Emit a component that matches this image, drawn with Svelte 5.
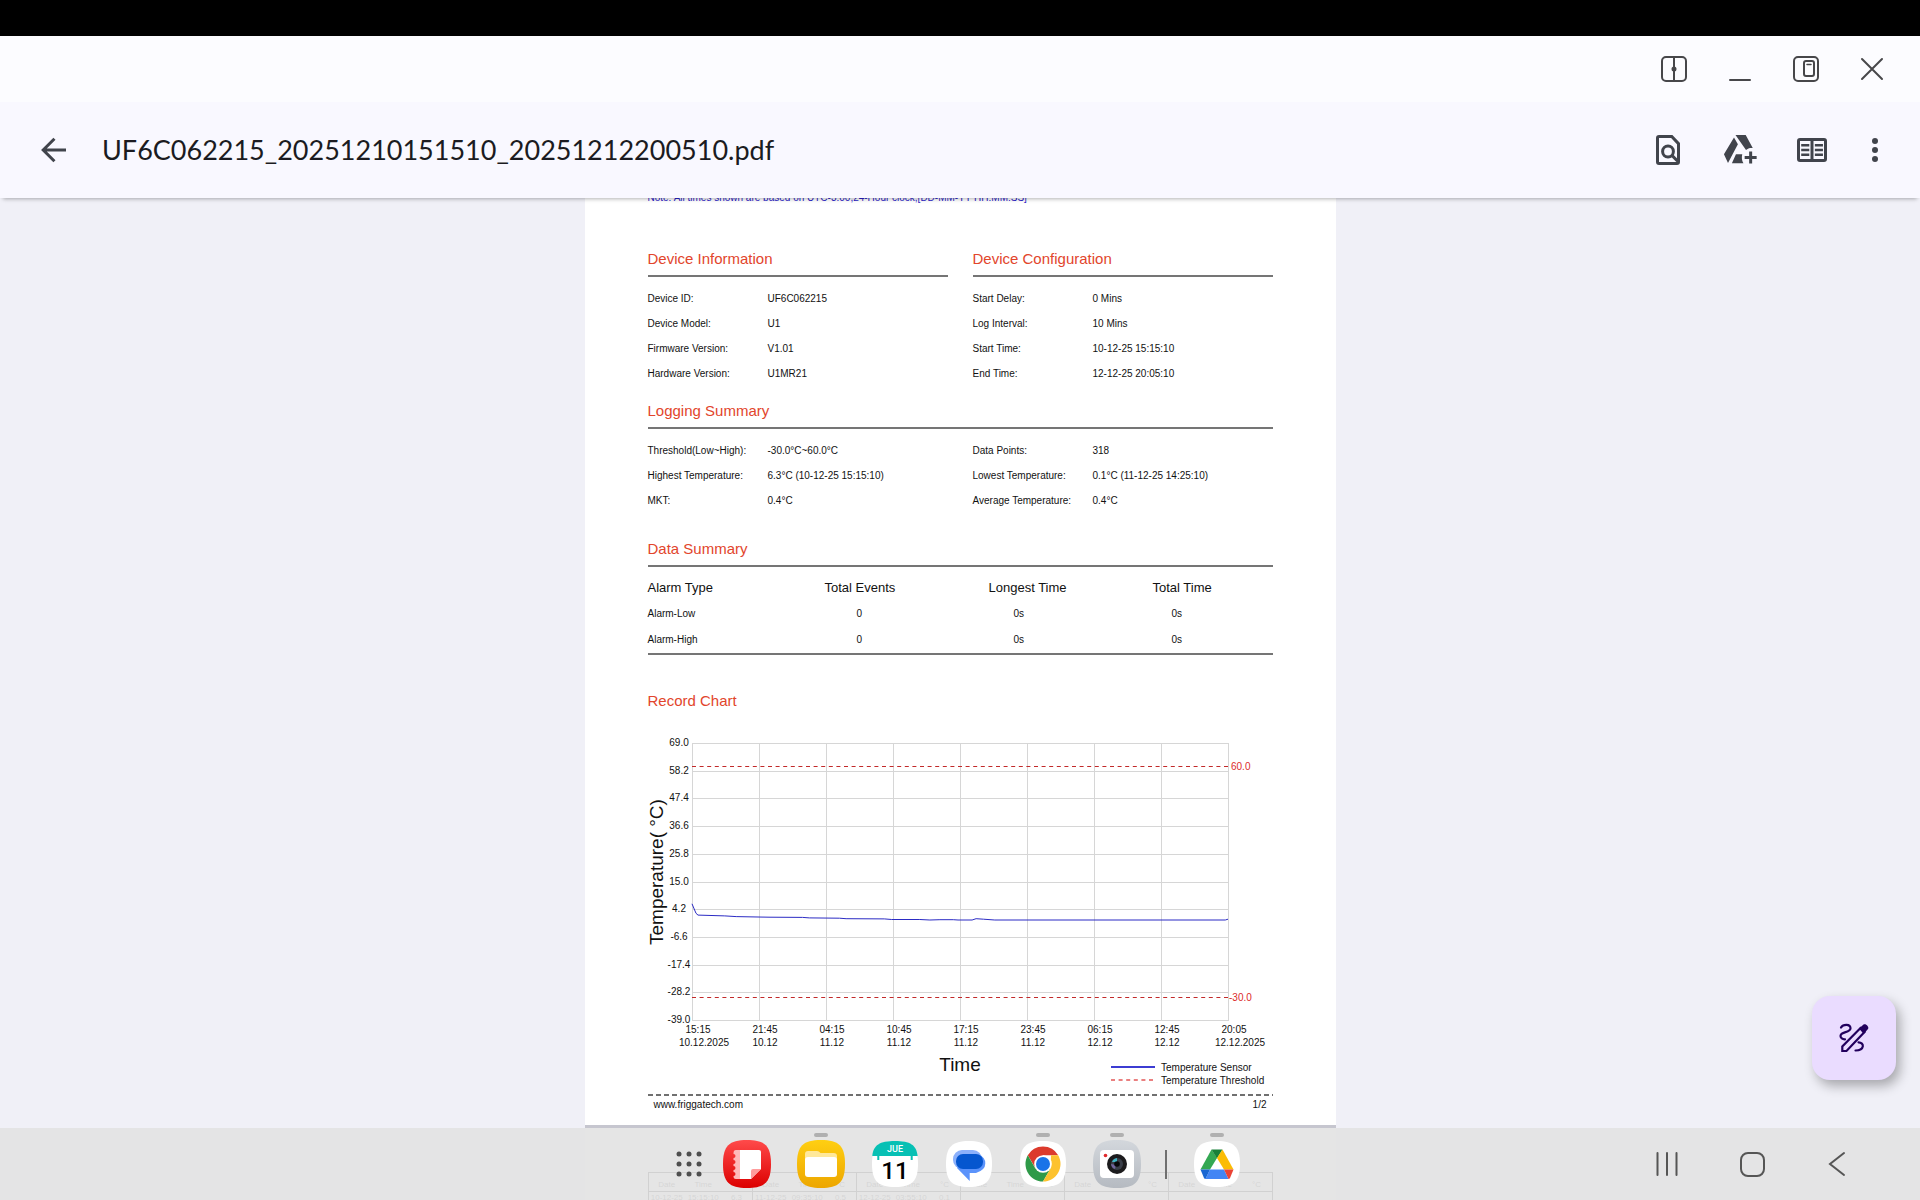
<script>
  const fileName = 'UF6C062215_20251210151510_20251212200510.pdf';

  const deviceInfo = [
    ['Device ID:', 'UF6C062215'],
    ['Device Model:', 'U1'],
    ['Firmware Version:', 'V1.01'],
    ['Hardware Version:', 'U1MR21'],
  ];
  const deviceConfig = [
    ['Start Delay:', '0 Mins'],
    ['Log Interval:', '10 Mins'],
    ['Start Time:', '10-12-25 15:15:10'],
    ['End Time:', '12-12-25 20:05:10'],
  ];
  const loggingLeft = [
    ['Threshold(Low~High):', '-30.0°C~60.0°C'],
    ['Highest Temperature:', '6.3°C (10-12-25 15:15:10)'],
    ['MKT:', '0.4°C'],
  ];
  const loggingRight = [
    ['Data Points:', '318'],
    ['Lowest Temperature:', '0.1°C (11-12-25 14:25:10)'],
    ['Average Temperature:', '0.4°C'],
  ];
  const alarms = [
    ['Alarm-Low', '0', '0s', '0s'],
    ['Alarm-High', '0', '0s', '0s'],
  ];

  // Chart geometry
  const plot = { left: 44, top: 32, width: 536, height: 277 };
  const yMax = 69;
  const yMin = -39;
  const yTicks = [69, 58.2, 47.4, 36.6, 25.8, 15, 4.2, -6.6, -17.4, -28.2, -39];
  const xTicks = [
    ['15:15', '10.12.2025'],
    ['21:45', '10.12'],
    ['04:15', '11.12'],
    ['10:45', '11.12'],
    ['17:15', '11.12'],
    ['23:45', '11.12'],
    ['06:15', '12.12'],
    ['12:45', '12.12'],
    ['20:05', '12.12.2025'],
  ];
  const yOf = (t) => plot.top + ((yMax - t) / (yMax - yMin)) * plot.height;
  const xOf = (i) => plot.left + i * (plot.width / 8);
  const grid = (v) => Math.round(v) + 0.5;

  // [tick position, temperature]
  const series = [
    [0, 6.3], [0.06, 2.6], [0.09, 1.9], [0.49, 1.6], [0.66, 1.3], [1.15, 1.1], [1.65, 1.0],
    [1.75, 0.8], [2.2, 0.7], [2.3, 0.5], [2.87, 0.4], [2.98, 0.2], [3.4, 0.2], [3.55, 0],
    [3.7, 0.1], [3.9, 0.1], [3.97, 0], [4.18, 0], [4.24, 0.5], [4.35, 0.3], [4.52, 0],
    [7.96, 0], [8, 0.3],
  ];
  const points = series.map(([i, t]) => `${xOf(i).toFixed(1)},${yOf(t).toFixed(1)}`).join(' ');

  const records = [
    ['10-12-25', '15:15:10', '6.3'],
    ['11-12-25', '09:35:10', '0.5'],
    ['12-12-25', '03:55:10', '0.1'],
    ['', '', ''],
    ['', '', ''],
    ['', '', ''],
  ];
</script>

{#snippet fields(rows)}
  <dl class="fields">
    {#each rows as [name, value]}
      <div class="field"><dt>{name}</dt><dd>{value}</dd></div>
    {/each}
  </dl>
{/snippet}

<div class="screen">
  <div class="status"></div>

  <div class="windowbar">
    <button class="win" aria-label="Split view">
      <svg viewBox="0 0 26 26"><rect x="1" y="1" width="24" height="24" rx="4" /><path d="M13 1v24" /><circle cx="13" cy="13" r="1.500" /></svg>
    </button>
    <button class="win" aria-label="Minimize">
      <svg viewBox="0 0 26 26"><path d="M3 24h20" /></svg>
    </button>
    <button class="win" aria-label="Pop-up view">
      <svg viewBox="0 0 26 26"><rect x="1" y="1" width="24" height="24" rx="4" /><rect x="11" y="5" width="10" height="15" rx="2" /><path d="M14 8.500h4" stroke-width="1.500" /></svg>
    </button>
    <button class="win" aria-label="Close">
      <svg viewBox="0 0 26 26"><path d="M3 3l20 20M23 3L3 23" /></svg>
    </button>
  </div>

  <header class="toolbar">
    <button class="tool" aria-label="Back">
      <svg viewBox="0 0 24 24"><path class="line" d="M20 12H5M12.300 4.500L4.800 12l7.500 7.500" /></svg>
    </button>
    <h1>{fileName}</h1>
    <div class="actions">
      <button class="tool" aria-label="Find in document">
        <svg viewBox="0 0 24 24"><path class="line" d="M6 3h8.500L19 7.800V20a1 1 0 0 1-1 1H6a1 1 0 0 1-1-1V4a1 1 0 0 1 1-1z" /><circle class="line" cx="12" cy="13" r="3.600" /><path class="line" d="M14.600 15.600L19 20" /></svg>
      </button>
      <button class="tool" aria-label="Add to Drive">
        <svg viewBox="0 0 24 24"><path d="M8 3.600l2.600 4.500L4 20.600 1.300 14.800zM9 2h6.800l4.700 8.700c-1.800-.2-3.300.2-4.500 1.300zM9.300 14.900h4.200c-.5 2.200-.3 4.200.8 6H6.600z" /><path class="line" d="M19.100 13v8M15.100 17h8" /></svg>
      </button>
      <button class="tool" aria-label="Reading mode">
        <svg viewBox="0 0 24 24"><rect class="line" x="3" y="5" width="18" height="14" rx="1" /><path class="line" d="M12 5v14" /><path class="line thin" d="M4.800 8.800h5.400M4.800 12h5.400M4.800 15.200h5.400M13.900 8.800h5.400M13.900 12h5.400M13.900 15.200h5.400" /></svg>
      </button>
      <button class="tool more" aria-label="More options">
        <svg viewBox="0 0 24 24"><circle cx="12" cy="6" r="2" /><circle cx="12" cy="12" r="2" /><circle cx="12" cy="18" r="2" /></svg>
      </button>
    </div>
  </header>

  <main class="viewer">
    <article class="page first">
      <p class="note">Note: All times shown are based on UTC-3:00,24-Hour clock,[DD-MM-YY HH:MM:SS]</p>

      <div class="pair device">
        <section><h2 class="ruled">Device Information</h2>{@render fields(deviceInfo)}</section>
        <section><h2 class="ruled">Device Configuration</h2>{@render fields(deviceConfig)}</section>
      </div>

      <section class="logging">
        <h2 class="ruled">Logging Summary</h2>
        <div class="pair">{@render fields(loggingLeft)}{@render fields(loggingRight)}</div>
      </section>

      <section class="data">
        <h2 class="ruled">Data Summary</h2>
        <table class="alarms">
          <thead>
            <tr><th>Alarm Type</th><th>Total Events</th><th>Longest Time</th><th>Total Time</th></tr>
          </thead>
          <tbody>
            {#each alarms as [type, events, longest, total]}
              <tr><td>{type}</td><td class="events">{events}</td><td class="longest">{longest}</td><td class="total">{total}</td></tr>
            {/each}
          </tbody>
        </table>
      </section>

      <section class="record">
        <h2>Record Chart</h2>
        <svg class="chart" viewBox="0 0 625 383" role="img" aria-label="Temperature record chart">
          {#each yTicks as t}
            <line class="grid" x1={plot.left} x2={plot.left + plot.width + 1} y1={grid(yOf(t))} y2={grid(yOf(t))} />
            <text x="31" y={Math.round(yOf(t)) + 3} text-anchor="middle">{t.toFixed(1)}</text>
          {/each}
          {#each xTicks as [time, date], i}
            <line class="grid" x1={grid(xOf(i))} x2={grid(xOf(i))} y1={plot.top} y2={plot.top + plot.height + 1} />
            <text x={xOf(i) + 6} y="322" text-anchor="middle">{time}</text>
            <text x={xOf(i) + (date.length > 5 ? 12 : 6)} y="335" text-anchor="middle">{date}</text>
          {/each}
          {#each [60, -30] as limit}
            <line class="limit" x1={plot.left} x2={plot.left + plot.width} y1={grid(yOf(limit))} y2={grid(yOf(limit))} />
            <text class="red" x={limit < 0 ? 581 : 583} y={Math.round(yOf(limit)) + 4}>{limit.toFixed(1)}</text>
          {/each}
          <polyline class="series" {points} />
          <text class="axis" transform="translate(15 234) rotate(-90)">Temperature( °C)</text>
          <text class="axis" x="312" y="360" text-anchor="middle">Time</text>
          <line class="key" x1="463" x2="507" y1="356" y2="356" />
          <text x="513" y="360">Temperature Sensor</text>
          <line class="limit pale" x1="463" x2="507" y1="369" y2="369" />
          <text x="513" y="373">Temperature Threshold</text>
        </svg>
      </section>

      <footer class="foot"><span>www.friggatech.com</span><span>1/2</span></footer>
    </article>

    <article class="page second">
      <div class="records">
        {#each records as [date, time, temp]}
          <table class="log">
            <thead><tr><th>Date</th><th>Time</th><th class="deg">°C</th></tr></thead>
            <tbody><tr><td class="date">{date}</td><td>{time}</td><td>{temp}</td></tr></tbody>
          </table>
        {/each}
      </div>
    </article>

    <button class="fab" aria-label="Annotate">
      <svg viewBox="0 0 36 36">
        <path d="M5 7.500c2-3.500 9.500-4 9.500.8 0 4.700-10 3-10 7.700 0 2 2 3.500 4.500 3.300" />
        <path d="M22.500 22.300c6 .2 6.500 8-3 8.200" />
        <path d="M6.300 31v-4.500L24.500 8l4 4L10.500 31z" />
        <path class="tip" d="M23 8.500l4.500-4c2-1.500 6 2 4.500 4.500l-4.300 5z" />
      </svg>
    </button>
  </main>

  <nav class="dock">
    <div class="apps">
      <button class="all" aria-label="All apps">
        <svg viewBox="0 0 28 28">
          {#each [4, 14, 24] as cy}{#each [4, 14, 24] as cx}<circle {cx} {cy} r="2.500" />{/each}{/each}
        </svg>
      </button>
      <button class="app" aria-label="Notes">
        <svg viewBox="0 0 48 48">
          <defs><linearGradient id="red" x2="0" y2="1"><stop stop-color="#ff4a4a" /><stop offset="1" stop-color="#dc0000" /></linearGradient></defs>
          <path fill="url(#red)" d="M24 0C42 0 48 6 48 24S42 48 24 48 0 42 0 24 6 0 24 0z" />
          <path fill="#ffb9b9" d="M13 10h5v29h-5c-2 0-2.500-1-2.500-3a2 2 0 0 0 0-4v-2a2 2 0 0 0 0-4v-2a2 2 0 0 0 0-4v-2a2 2 0 0 0 0-4c0-3 .5-4 2.500-4z" />
          <path fill="#fff" d="M17 10h19q2 0 2 2v17L28 39H17z" />
          <path fill="#ff9c9c" d="M38 29h-8q-2 0-2 2v8z" />
        </svg>
      </button>
      <button class="app open" aria-label="My files">
        <svg viewBox="0 0 48 48">
          <defs><linearGradient id="amber" x2="0" y2="1"><stop stop-color="#ffcf12" /><stop offset="1" stop-color="#eda600" /></linearGradient></defs>
          <path fill="url(#amber)" d="M24 0C42 0 48 6 48 24S42 48 24 48 0 42 0 24 6 0 24 0z" />
          <path fill="#ffe89a" d="M8 14q0-3 3-3h9q2 0 3.500 2h13q3.500 0 3.500 3v4H8z" />
          <rect x="8" y="17" width="32" height="20" rx="3" fill="#fff" />
        </svg>
      </button>
      <button class="app calendar" aria-label="Calendar">
        <svg viewBox="0 0 48 48">
          <path fill="#fff" d="M24 1C41 1 47 7 47 24S41 47 24 47 1 41 1 24 7 1 24 1z" />
          <path fill="#07c0b4" d="M1.300 16C2.500 5 8.500 1 24 1s21.500 4 22.700 15h-5v4h-2v-4H8.300v4h-2v-4z" />
          <text class="weekday" x="24" y="12" text-anchor="middle">JUE</text>
          <text class="day" x="24" y="39" text-anchor="middle">11</text>
        </svg>
      </button>
      <button class="app" aria-label="Messages">
        <svg viewBox="0 0 48 48">
          <path fill="#fff" d="M24 1C41 1 47 7 47 24S41 47 24 47 1 41 1 24 7 1 24 1z" />
          <rect x="8" y="10" width="29" height="19" rx="9" fill="#8bb0fb" />
          <path fill="#5b93fb" d="M20 15h14q6.300 2 6.300 8.500T31 33h-6.300v8L12 28z" />
          <rect x="11" y="14" width="27" height="15" rx="7" fill="#0556cf" />
        </svg>
      </button>
      <button class="app open" aria-label="Chrome">
        <svg viewBox="0 0 48 48">
          <path fill="#fff" d="M24 1C41 1 47 7 47 24S41 47 24 47 1 41 1 24 7 1 24 1z" />
          <path fill="#dc3a2c" d="M8.800 15.300A17.500 17.500 0 0 1 39.200 15.300H24l-7.500 13z" />
          <path fill="#2f9a49" d="M8.800 15.300A17.500 17.500 0 0 0 24 41.500l7.600-13.100H16.400z" />
          <path fill="#fdc22e" d="M39.200 15.300A17.500 17.500 0 0 1 24 41.500l7.600-13.100L32 15.300z" />
          <circle cx="24" cy="24" r="8.800" fill="#fff" /><circle cx="24" cy="24" r="7" fill="#1a73e8" />
        </svg>
      </button>
      <button class="app open" aria-label="Camera">
        <svg viewBox="0 0 48 48">
          <defs><linearGradient id="steel" x2="0" y2="1"><stop stop-color="#d3d7dc" /><stop offset="1" stop-color="#b5bac1" /></linearGradient></defs>
          <path fill="url(#steel)" d="M24 0C42 0 48 6 48 24S42 48 24 48 0 42 0 24 6 0 24 0z" />
          <rect x="7" y="10" width="34" height="28" rx="4" fill="#fff" />
          <circle cx="12.500" cy="15.500" r="1.800" fill="#e0292d" />
          <circle cx="24" cy="24" r="10" fill="#1c1b1d" /><circle cx="24" cy="24" r="6" fill="#3a3f49" />
          <path d="M19 22a6 6 0 0 1 5-4v4z" fill="#3fb4c4" /><path d="M18 24a6 6 0 0 0 4 5l1-4z" fill="#70649c" />
          <circle cx="24" cy="24" r="2.800" fill="#08080a" />
        </svg>
      </button>
      <span class="divider"></span>
      <button class="app open" aria-label="Drive">
        <svg viewBox="0 0 48 48">
          <path fill="#fff" d="M24 1C41 1 47 7 47 24S41 47 24 47 1 41 1 24 7 1 24 1z" />
          <path fill="#34a853" d="M18.500 9.500L7.500 29.500H17l7-11.500z" />
          <path fill="#188038" d="M18.500 9.500h11L24 18.500z" />
          <path fill="#fbbc04" d="M29.500 9.500l11 20H31L24 18z" />
          <path fill="#4285f4" d="M17 29.500h14l4.500 9.500h-23z" />
          <path fill="#1967d2" d="M7.500 29.500H17L12.500 39q-1 0-1.500-1z" />
          <path fill="#ea4335" d="M31 29.500h9.500L37 38q-.5 1-1.500 1z" />
        </svg>
      </button>
    </div>
    <div class="system">
      <button aria-label="Recents"><svg viewBox="0 0 28 28"><path d="M4.500 3v22M14 3v22M23.500 3v22" /></svg></button>
      <button aria-label="Home"><svg viewBox="0 0 28 28"><rect x="3" y="3" width="23" height="23" rx="7" /></svg></button>
      <button aria-label="Go back"><svg viewBox="0 0 28 28"><path d="M21 3L7 14l14 11" /></svg></button>
    </div>
  </nav>
</div>

<style>
  :global(body) {
    background: #f0f0f7;
  }
  .screen {
    position: relative;
    display: flex;
    flex-direction: column;
    height: 100vh;
    overflow: hidden;
    font-family: 'Liberation Sans', Arial, sans-serif;
    color: #111;
  }
  button {
    padding: 0;
    border: 0;
    background: none;
    cursor: pointer;
  }
  svg {
    display: block;
  }
  h1, h2, p, dl, dd {
    margin: 0;
  }

  .status {
    flex: none;
    height: 36px;
    background: #000;
  }
  .windowbar {
    flex: none;
    display: flex;
    justify-content: flex-end;
    align-items: center;
    gap: 40px;
    height: 66px;
    padding-right: 35px;
    background: #fcfcff;
  }
  .win svg {
    width: 26px;
    height: 26px;
    fill: none;
    stroke: #47474a;
    stroke-width: 2;
    stroke-linecap: round;
  }
  .toolbar {
    flex: none;
    z-index: 1;
    display: flex;
    align-items: center;
    height: 96px;
    padding: 0 27px 0 36px;
    background: #f9f8ff;
    box-shadow: 0 4px 4px -3px rgba(0, 0, 0, 0.3);
  }
  .toolbar h1 {
    flex: 1;
    margin-left: 30px;
    font: 400 27px/36px Lato, 'Open Sans', sans-serif;
    color: #1b1b21;
  }
  .tool svg {
    width: 36px;
    height: 36px;
    fill: #41444c;
  }
  .tool .line {
    fill: none;
    stroke: #41444c;
    stroke-width: 2;
  }
  .tool .thin {
    stroke-width: 1.600;
  }
  .actions {
    display: flex;
    gap: 36px;
  }
  .more {
    margin-left: -9px;
  }

  .viewer {
    flex: 1;
    min-height: 0;
    position: relative;
    overflow: hidden;
    background: #f0f0f7;
  }
  .page {
    box-sizing: border-box;
    width: 751px;
    max-width: 100%;
    margin: 0 auto;
    padding: 0 63px;
    background: #fff;
    font-size: 10px;
  }
  .first {
    margin-top: -6px;
    padding-bottom: 13px;
    border-bottom: 3px solid #c6c6cf;
  }
  .note {
    line-height: 12px;
    color: #2a22c8;
  }
  .pair {
    display: grid;
    grid-template-columns: 1fr 1fr;
    gap: 25px;
  }
  .device {
    margin-top: 45px;
  }
  h2 {
    font-size: 15px;
    font-weight: 400;
    line-height: 20px;
    color: #e2452c;
  }
  .ruled {
    padding-bottom: 6px;
    border-bottom: 2px solid #757575;
  }
  .fields {
    padding-top: 9px;
  }
  .field {
    display: grid;
    grid-template-columns: 120px 1fr;
    line-height: 25px;
  }
  .logging {
    margin-top: 15px;
  }
  .data {
    margin-top: 26px;
  }
  .alarms {
    width: 100%;
    padding: 7px 0 1px;
    border-bottom: 2px solid #757575;
    border-spacing: 0;
    table-layout: fixed;
  }
  .alarms th, .alarms td {
    height: 26px;
    padding: 0;
    text-align: left;
    font-weight: 400;
  }
  .alarms th {
    width: 164px;
    font-size: 13px;
  }
  .alarms th:first-child {
    width: 177px;
  }
  .alarms th:last-child {
    width: auto;
  }
  .alarms .events {
    padding-left: 32px;
  }
  .alarms .longest {
    padding-left: 25px;
  }
  .alarms .total {
    padding-left: 19px;
  }
  .record {
    margin-top: 36px;
  }
  .chart {
    width: 100%;
    font-size: 10px;
    fill: #111;
  }
  .grid {
    stroke: #d6d6d6;
  }
  .limit {
    stroke: #c22a2a;
    stroke-dasharray: 4 3.600;
  }
  .pale {
    stroke: #ea8080;
    stroke-width: 2;
  }
  .red {
    fill: #dc2a2a;
  }
  .series {
    fill: none;
    stroke: #2b2bc4;
  }
  .key {
    stroke: #3c3cd2;
    stroke-width: 2;
  }
  .axis {
    font-size: 19px;
  }
  .foot {
    display: flex;
    justify-content: space-between;
    padding: 4px 6px 0;
    line-height: 14px;
    background: repeating-linear-gradient(90deg, #707070 0 5px, transparent 5px 8px) top / 100% 2px no-repeat;
  }

  .second {
    padding-top: 44px;
  }
  .records {
    display: grid;
    grid-template-columns: repeat(6, 1fr);
    border: 1px solid #333;
    border-width: 1px 1px 0 0;
  }
  .log {
    width: 100%;
    table-layout: fixed;
    border-left: 1px solid #333;
    border-spacing: 0;
    text-align: center;
    font-size: 8px;
    color: #555;
  }
  .log th {
    height: 18px;
    padding: 6px 0 0;
    box-sizing: border-box;
    line-height: 12px;
    border-bottom: 1px solid #333;
    font-weight: 400;
  }
  .log td {
    height: 12px;
    padding: 0;
    line-height: 12px;
    white-space: nowrap;
  }
  .log .deg {
    width: 30px;
  }

  .fab {
    position: absolute;
    right: 24px;
    bottom: 120px;
    display: grid;
    place-items: center;
    width: 84px;
    height: 84px;
    border-radius: 18px;
    background: #eadcff;
    box-shadow: 4px 6px 12px rgba(0, 0, 0, 0.3);
  }
  .fab svg {
    width: 36px;
    height: 36px;
    fill: none;
    stroke: #22005d;
    stroke-width: 2.200;
    stroke-linecap: round;
  }
  .fab .tip {
    fill: #22005d;
    stroke: none;
  }

  .dock {
    position: absolute;
    z-index: 2;
    inset: auto 0 0;
    display: grid;
    grid-template-columns: 1fr auto 1fr;
    align-items: center;
    height: 72px;
    padding-right: 4px;
    background: rgba(226, 226, 226, 0.9);
    box-sizing: border-box;
  }
  .apps {
    grid-column: 2;
    display: flex;
    align-items: center;
    gap: 26px;
  }
  .all {
    margin-right: -6px;
  }
  .all svg {
    width: 28px;
    height: 28px;
    fill: #4f4f4f;
  }
  .app {
    position: relative;
  }
  .app svg {
    width: 48px;
    height: 48px;
  }
  .open::before {
    content: '';
    position: absolute;
    top: -7px;
    left: 17px;
    width: 14px;
    height: 4px;
    border-radius: 2px;
    background: #b0b0b0;
  }
  .weekday {
    font: 500 9px Roboto, sans-serif;
    fill: #fff;
  }
  .day {
    font: 500 24px Roboto, sans-serif;
    fill: #000;
  }
  .divider {
    width: 2px;
    height: 29px;
    margin-left: -2px;
    background: #707070;
  }
  .system {
    display: flex;
    justify-content: flex-end;
    gap: 57px;
    padding-right: 65px;
  }
  .system svg {
    width: 28px;
    height: 28px;
    fill: none;
    stroke: #555;
    stroke-width: 2;
    stroke-linecap: round;
  }
</style>
